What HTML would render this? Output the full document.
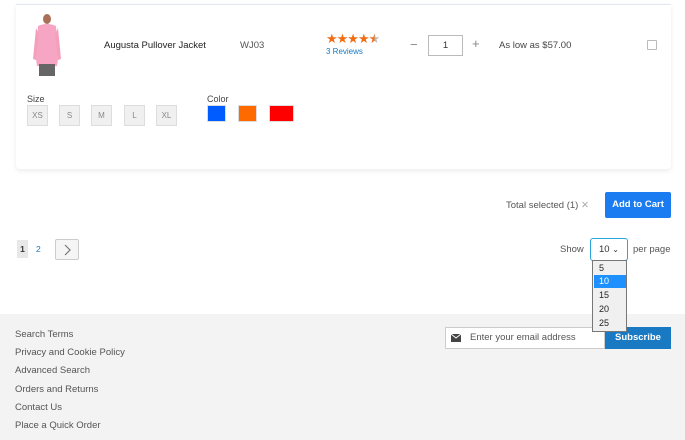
<!DOCTYPE html>
<html><head><style>
*{margin:0;padding:0;box-sizing:border-box}
body{width:685px;height:440px;position:relative;background:#fff;font-family:"Liberation Sans",sans-serif;color:#333;font-size:9px;overflow:hidden}
.a{position:absolute}
.card{left:16px;top:4px;width:655px;height:165px;border-top:1px solid #e3e8f0;box-shadow:0 2px 6px rgba(0,0,0,.08);border-radius:0 0 4px 4px;background:#fff}
.sz{width:21px;height:21px;border:1px solid #ddd;background:#f0f0f0;color:#888;font-size:8px;text-align:center;line-height:19px;top:105px}
.sw{width:19px;height:17px;top:105px;border:1px solid #ddd}
.fl{left:15px;font-size:9.5px;color:#555}
.opt{left:594px;width:32px;height:13px;font-size:9px;line-height:13px;padding-left:5px;color:#222;z-index:5}
</style></head><body>
<div class="a card"></div>
<svg class="a" style="left:30px;top:14px" width="34" height="62">
<ellipse cx="17" cy="5" rx="4" ry="5" fill="#a87058"/>
<path d="M8 12 Q17 8 26 12 L28 45 L27 52 L7 52 L6 45 Z" fill="#f6a6c2"/>
<path d="M6 14 L3 45 L6 46 L9 20Z M28 14 L31 45 L28 46 L25 20Z" fill="#f4a0bd"/>
<rect x="9" y="50" width="16" height="12" fill="#666"/>
</svg>
<div class="a" style="left:104px;top:40px;font-size:9.5px;color:#222">Augusta Pullover Jacket</div>
<div class="a" style="left:240px;top:40px;font-size:9.5px;color:#555">WJ03</div>
<div class="a" style="left:326px;top:31px;font-size:13px;color:#f26c13;letter-spacing:-1px">★★★★<span style="background:linear-gradient(90deg,#f26c13 55%,#bbb 55%);-webkit-background-clip:text;color:transparent">★</span></div>
<div class="a" style="left:326px;top:47px;font-size:8px;color:#1979c3">3 Reviews</div>
<div class="a" style="left:410px;top:37px;font-size:13px;color:#888">−</div>
<div class="a" style="left:428px;top:35px;width:35px;height:21px;border:1px solid #bbb;text-align:center;line-height:19px;font-size:9.5px">1</div>
<div class="a" style="left:472px;top:36px;font-size:13px;color:#888">+</div>
<div class="a" style="left:499px;top:40px;font-size:9.5px;color:#444">As low as $57.00</div>
<div class="a" style="left:647px;top:40px;width:10px;height:10px;border:1px solid #bbb;border-radius:1px"></div>
<div class="a" style="left:27px;top:94px;font-size:9px;color:#444">Size</div>
<div class="a sz" style="left:27px">XS</div><div class="a sz" style="left:59px">S</div><div class="a sz" style="left:91px">M</div><div class="a sz" style="left:124px">L</div><div class="a sz" style="left:156px">XL</div>
<div class="a" style="left:207px;top:94px;font-size:9px;color:#444">Color</div>
<div class="a sw" style="left:207px;background:#005cff"></div>
<div class="a sw" style="left:238px;background:#ff6a00"></div>
<div class="a sw" style="left:269px;background:#ff0000;width:25px"></div>
<div class="a" style="left:506px;top:200px;font-size:9.5px;color:#555">Total selected (1) <span style="color:#aaa">✕</span></div>
<div class="a" style="left:605px;top:192px;width:66px;height:26px;background:#1a7cf0;color:#fff;border-radius:2px;text-align:center;line-height:26px;font-size:9.5px;font-weight:bold">Add to Cart</div>
<div class="a" style="left:17px;top:240px;width:11px;height:18px;background:#e8e8e8;font-size:8.5px;font-weight:bold;line-height:18px;text-align:center">1</div>
<div class="a" style="left:36px;top:244px;font-size:8.5px;color:#1979c3">2</div>
<div class="a" style="left:55px;top:239px;width:24px;height:21px;border:1px solid #ccc;background:#f5f5f5;border-radius:2px"></div>
<svg class="a" style="left:62px;top:243px" width="10" height="14"><path d="M3 2 L8 7 L3 12" stroke="#777" fill="none" stroke-width="1.2"/></svg>
<div class="a" style="left:560px;top:244px;font-size:9.5px;color:#555">Show</div>
<div class="a" style="left:590px;top:238px;width:38px;height:23px;border:1px solid #2ca5dd;border-radius:3px;font-size:9.5px;line-height:21px;padding-left:8px">10 <span style="font-size:8px">⌄</span></div>
<div class="a" style="left:633px;top:244px;font-size:9.5px;color:#555">per page</div>
<div class="a" style="left:0;top:314px;width:685px;height:126px;background:#f3f3f3"></div>
<div class="a" style="left:445px;top:327px;width:160px;height:22px;border:1px solid #ccc;background:#fff;font-size:9.5px;color:#555;line-height:20px;padding-left:24px">Enter your email address</div>
<svg class="a" style="left:451px;top:334px" width="10" height="8"><rect width="10" height="8" fill="#444"/><path d="M0 0 L5 4 L10 0" stroke="#fff" fill="none" stroke-width="1"/></svg>
<div class="a" style="left:605px;top:327px;width:66px;height:22px;background:#1979c3;color:#fff;font-size:9.5px;font-weight:bold;line-height:22px;text-align:center">Subscribe</div>
<div class="a" style="left:592px;top:260px;width:35px;height:72px;background:#f0f0f0;border:1px solid #777;z-index:4"></div>
<div class="a opt" style="top:262px">5</div>
<div class="a opt" style="top:275px;background:#1e90ff;color:#fff">10</div>
<div class="a opt" style="top:289px">15</div>
<div class="a opt" style="top:303px">20</div>
<div class="a opt" style="top:317px">25</div>
<div class="a fl" style="top:329px">Search Terms</div>
<div class="a fl" style="top:347px">Privacy and Cookie Policy</div>
<div class="a fl" style="top:365px">Advanced Search</div>
<div class="a fl" style="top:384px">Orders and Returns</div>
<div class="a fl" style="top:402px">Contact Us</div>
<div class="a fl" style="top:420px">Place a Quick Order</div>
</body></html>
